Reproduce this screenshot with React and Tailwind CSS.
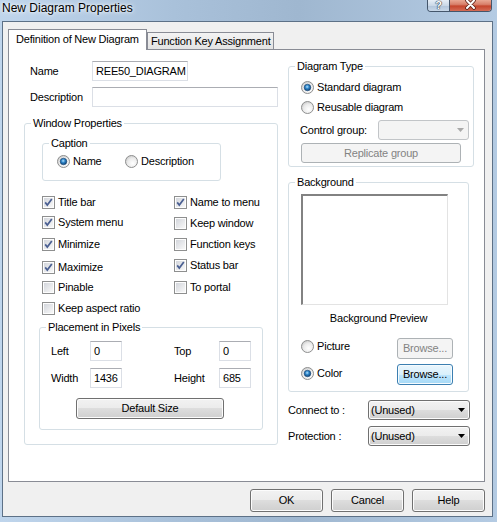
import React from "react";

function Group({ label, className, children }) {
  return (
    <div className={"border border-[#d5dfe5] rounded-[3px] flex flex-col shrink-0 " + className}>
      <div className="-mt-[7px] ml-[6px] h-[13px] leading-[13px] px-[2px] bg-white self-start">{label}</div>
      {children}
    </div>
  );
}

function TextBox({ className, value }) {
  return (
    <div className={"h-[20px] shrink-0 border border-[#dbdfe6] border-t-[#abadb3] bg-white px-[3px] flex items-center overflow-hidden whitespace-nowrap " + className}>
      {value}
    </div>
  );
}

function CheckBox({ checked }) {
  return (
    <svg width="13" height="13" viewBox="0 0 13 13" className="shrink-0">
      <defs>
        <linearGradient id="cbg" x1="0" y1="0" x2="1" y2="1">
          <stop offset="0" stopColor="#d3d6dc" />
          <stop offset="1" stopColor="#f8f8f8" />
        </linearGradient>
      </defs>
      <rect x="0.5" y="0.5" width="12" height="12" fill="#fdfdfd" stroke="#8e8f8f" />
      <rect x="2" y="2" width="9" height="9" fill="url(#cbg)" />
      {checked && (
        <path d="M3.2 6.4 L5.3 9 L9.8 3" fill="none" stroke="#4a5f92" strokeWidth="1.7" />
      )}
    </svg>
  );
}

function Radio({ checked }) {
  return (
    <svg width="13" height="13" viewBox="0 0 13 13" className="shrink-0">
      <defs>
        <radialGradient id="rbg" cx="0.6" cy="0.65" r="0.7">
          <stop offset="0" stopColor="#ffffff" />
          <stop offset="0.6" stopColor="#ebebeb" />
          <stop offset="1" stopColor="#c8c8c8" />
        </radialGradient>
        <radialGradient id="rdot" cx="0.45" cy="0.4" r="0.6">
          <stop offset="0" stopColor="#b5e3ff" />
          <stop offset="0.45" stopColor="#2f86c9" />
          <stop offset="1" stopColor="#0d3f73" />
        </radialGradient>
      </defs>
      <circle cx="6.5" cy="6.5" r="6" fill="url(#rbg)" stroke="#8e8f8f" />
      {checked && <circle cx="6.5" cy="6.5" r="3.3" fill="url(#rdot)" stroke="#1a4775" strokeWidth="0.6" />}
    </svg>
  );
}

function RadioItem({ checked, label, className }) {
  return (
    <div className={"h-[13px] flex items-center shrink-0 " + (className || "")}>
      <Radio checked={checked} />
      <span className="ml-[3px] whitespace-nowrap">{label}</span>
    </div>
  );
}

function CheckItem({ checked, label, className }) {
  return (
    <div className={"h-[13px] flex items-center " + className}>
      <CheckBox checked={checked} />
      <span className="ml-[3px] whitespace-nowrap">{label}</span>
    </div>
  );
}

function Btn({ children, className, disabled, focused }) {
  const look = disabled
    ? "border-[#adb2b5] bg-[#f4f4f4] text-[#838383]"
    : focused
    ? "border-[#3c7fb1] bg-[linear-gradient(to_bottom,#eaf6fd_0%,#d9f0fc_50%,#bee6fd_50%,#a7d9f5_100%)] shadow-[inset_0_0_0_1px_#f6fbfe]"
    : "border-[#707070] bg-[linear-gradient(to_bottom,#f2f2f2_0%,#ebebeb_50%,#dddddd_50%,#cfcfcf_100%)] shadow-[inset_0_0_0_1px_#fcfcfc]";
  return (
    <div className={"shrink-0 flex items-center justify-center rounded-[3px] border whitespace-nowrap " + look + " " + className}>
      {children}
    </div>
  );
}

function Arrow({ color }) {
  return (
    <svg width="7" height="4" viewBox="0 0 7 4" className="shrink-0">
      <polygon points="0,0 7,0 3.5,4" fill={color} />
    </svg>
  );
}

function Combo({ value, className, disabled }) {
  const look = disabled
    ? "border-[#c2c5c8] bg-[#f4f4f4]"
    : "border-[#707070] bg-[linear-gradient(to_bottom,#f2f2f2_0%,#ebebeb_50%,#dddddd_50%,#cfcfcf_100%)] shadow-[inset_0_0_0_1px_#fcfcfc]";
  return (
    <div className={"shrink-0 h-[20px] rounded-[3px] border flex items-center pl-[2px] pr-[4px] " + look + " " + className}>
      <span className="flex-1 whitespace-nowrap">{value}</span>
      <Arrow color={disabled ? "#a9a9a9" : "#000000"} />
    </div>
  );
}

function LeftColumn() {
  return (
    <div className="w-[254px] shrink-0 flex flex-col">
      <div className="mt-[11px] h-[20px] flex items-center pl-[6px]">
        <span className="w-[62px] shrink-0">Name</span>
        <TextBox className="w-[96px] px-[2px]" value="REE50_DIAGRAM" />
      </div>
      <div className="mt-[6px] h-[20px] flex items-center pl-[6px]">
        <span className="w-[62px] shrink-0">Description</span>
        <TextBox className="w-[186px]" value="" />
      </div>

      <Group label="Window Properties" className="mt-[16px] h-[322px] w-[254px]">
        <Group label="Caption" className="mt-[13px] ml-[17px] w-[179px] h-[38px]">
          <div className="mt-[5px] pl-[14px] flex">
            <RadioItem checked label="Name" className="w-[68px]" />
            <RadioItem label="Description" />
          </div>
        </Group>

        <div className="mt-[15px] ml-[17px] flex">
          <div className="w-[132px] flex flex-col">
            <CheckItem checked label="Title bar" className="" />
            <CheckItem checked label="System menu" className="mt-[7px]" />
            <CheckItem checked label="Minimize" className="mt-[9px]" />
            <CheckItem checked label="Maximize" className="mt-[10px]" />
            <CheckItem label="Pinable" className="mt-[7px]" />
            <CheckItem label="Keep aspect ratio" className="mt-[8px]" />
          </div>
          <div className="flex flex-col">
            <CheckItem checked label="Name to menu" className="" />
            <CheckItem label="Keep window" className="mt-[8px]" />
            <CheckItem label="Function keys" className="mt-[8px]" />
            <CheckItem checked label="Status bar" className="mt-[8px]" />
            <CheckItem label="To portal" className="mt-[9px]" />
          </div>
        </div>

        <Group label="Placement in Pixels" className="mt-[12px] ml-[14px] w-[224px] h-[103px]">
          <div className="mt-[7px] h-[20px] pl-[11px] flex items-center">
            <span className="w-[39px] shrink-0">Left</span>
            <TextBox className="w-[32px]" value="0" />
            <span className="ml-[52px] w-[45px] shrink-0">Top</span>
            <TextBox className="w-[32px]" value="0" />
          </div>
          <div className="mt-[7px] h-[20px] pl-[11px] flex items-center">
            <span className="w-[39px] shrink-0">Width</span>
            <TextBox className="w-[32px]" value="1436" />
            <span className="ml-[52px] w-[45px] shrink-0">Height</span>
            <TextBox className="w-[32px]" value="685" />
          </div>
          <Btn className="mt-[10px] ml-[36px] w-[148px] h-[21px]">Default Size</Btn>
        </Group>
      </Group>
    </div>
  );
}

function RightColumn() {
  return (
    <div className="w-[186px] ml-[10px] shrink-0 flex flex-col">
      <Group label="Diagram Type" className="mt-[16px] w-[186px] h-[101px]">
        <RadioItem checked label="Standard diagram" className="mt-[8px] ml-[12px]" />
        <RadioItem label="Reusable diagram" className="mt-[7px] ml-[12px]" />
        <div className="mt-[6px] h-[20px] pl-[11px] flex items-center">
          <span className="w-[78px] shrink-0">Control group:</span>
          <Combo className="w-[91px]" value="" disabled />
        </div>
        <Btn disabled className="mt-[3px] ml-[12px] w-[160px] h-[20px]">Replicate group</Btn>
      </Group>

      <Group label="Background" className="mt-[15px] w-[181px] h-[210px]">
        <div className="mt-[5px] ml-[12px] w-[147px] h-[111px] bg-white border-t-2 border-l-2 border-r border-b border-t-[#828282] border-l-[#828282] border-r-[#e3e3e3] border-b-[#e3e3e3]" />
        <div className="mt-[7px] h-[13px] leading-[13px] text-center">Background Preview</div>
        <div className="mt-[13px] pl-[12px] flex items-start">
          <RadioItem label="Picture" className="mt-[2px] w-[96px]" />
          <Btn disabled className="w-[56px] h-[21px]">Browse...</Btn>
        </div>
        <div className="mt-[5px] pl-[12px] flex items-start">
          <RadioItem checked label="Color" className="mt-[3px] w-[96px]" />
          <Btn focused className="w-[56px] h-[21px]">Browse...</Btn>
        </div>
      </Group>

      <div className="mt-[8px] h-[20px] flex items-center">
        <span className="w-[80px] shrink-0">Connect to :</span>
        <Combo className="w-[102px]" value="(Unused)" />
      </div>
      <div className="mt-[6px] h-[20px] flex items-center">
        <span className="w-[80px] shrink-0">Protection :</span>
        <Combo className="w-[102px]" value="(Unused)" />
      </div>
    </div>
  );
}

export default function App() {
  return (
    <div className="w-[497px] h-[522px] flex flex-col overflow-hidden bg-[linear-gradient(to_right,#bfd5ec_0%,#a9c1da_35%,#9fb7d0_60%,#b4cbe3_100%)] font-['Liberation_Sans',Arial,sans-serif] text-[11px] leading-[13px] tracking-[-0.2px] text-black">
      <div className="h-[21px] shrink-0 flex items-start">
        <span className="pl-[2px] pt-[1px] text-[12px] leading-[14px] tracking-normal whitespace-nowrap [text-shadow:0_0_6px_#ffffff,0_0_3px_#ffffff]">
          New Diagram Properties
        </span>
        <div className="ml-auto mr-[5px] flex h-[12px] rounded-b-[4px] border border-t-0 border-[#44566b] overflow-hidden">
          <div className="w-[22px] flex justify-center bg-[linear-gradient(to_bottom,#e7eef6_0%,#cad8e7_50%,#b3c6db_55%,#c8d7e8_100%)] border-r border-[#44566b]">
            <span className="text-[11px] leading-[10px] font-bold text-white tracking-normal [text-shadow:0_0_1px_#2a3a4c,0_0_1px_#2a3a4c,0_0_1px_#2a3a4c]">?</span>
          </div>
          <div className="w-[41px] flex justify-center bg-[linear-gradient(to_bottom,#e9a894_0%,#d8806b_40%,#c5462e_55%,#d46c56_100%)]">
            <svg width="11" height="10" viewBox="0 0 11 10">
              <path d="M2 0.5 L9 8 M9 0.5 L2 8" stroke="#5b2118" strokeWidth="3.6" strokeLinecap="round" />
              <path d="M2 0.5 L9 8 M9 0.5 L2 8" stroke="#ffffff" strokeWidth="2" strokeLinecap="round" />
            </svg>
          </div>
        </div>
      </div>

      <div className="ml-[2px] w-[491px] h-[496px] shrink-0 border border-[#5d7187] bg-[#f0f0f0] flex flex-col">
        <div className="mt-[7px] ml-[5px] h-[20px] flex items-end">
          <div className="relative z-10 -mb-[1px] h-[21px] w-[139px] bg-white border border-b-0 border-[#898c95] pl-[7px] pt-[3px] whitespace-nowrap">
            Definition of New Diagram
          </div>
          <div className="h-[17px] w-[127px] border border-b-0 border-[#898c95] bg-[linear-gradient(to_bottom,#f3f3f3,#e3e3e3)] pl-[3px] pt-[2px] whitespace-nowrap">
            Function Key Assignment
          </div>
        </div>

        <div className="ml-[5px] w-[477px] h-[433px] shrink-0 border border-[#898c95] bg-white flex pl-[15px]">
          <LeftColumn />
          <RightColumn />
        </div>

        <div className="mt-[7px] pr-[7px] flex justify-end gap-[8px]">
          <Btn className="w-[73px] h-[23px]">OK</Btn>
          <Btn className="w-[73px] h-[23px]">Cancel</Btn>
          <Btn className="w-[73px] h-[23px]">Help</Btn>
        </div>
      </div>
    </div>
  );
}
